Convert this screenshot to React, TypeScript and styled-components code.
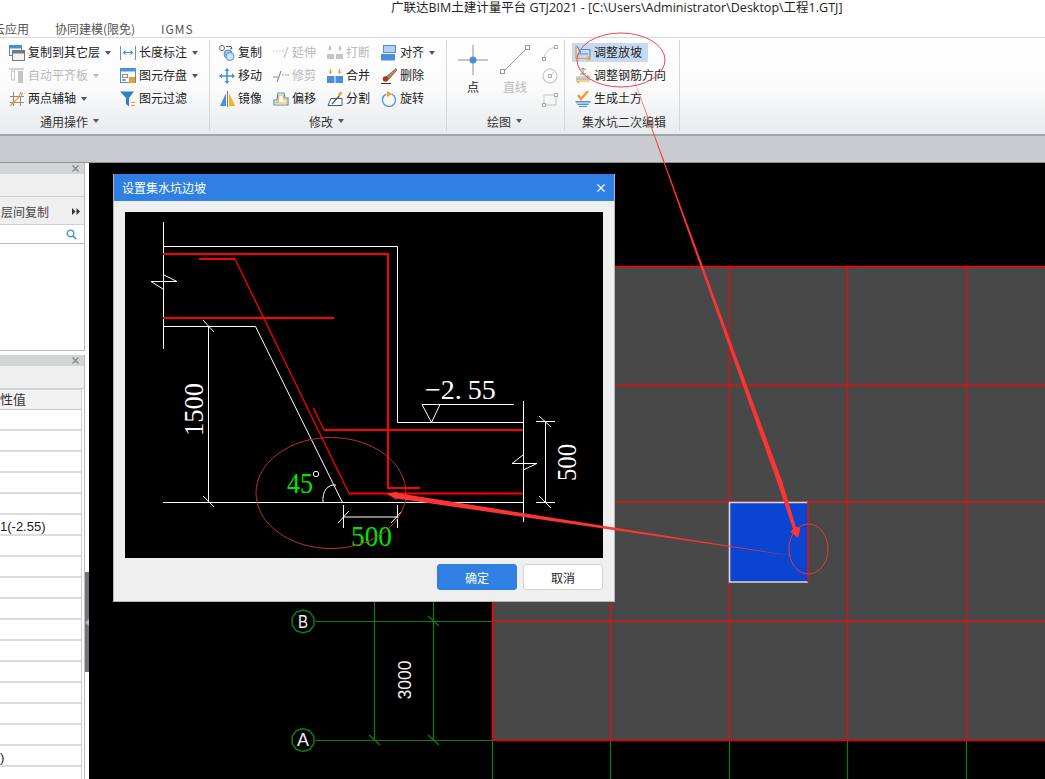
import React from 'react';
import styled, { createGlobalStyle } from 'styled-components';

const GlobalStyle = createGlobalStyle`
  html, body {
    margin: 0;
    padding: 0;
    background: #fff;
  }
  * {
    box-sizing: border-box;
  }
`;

const Page = styled.div`
  position: relative;
  width: 1045px;
  height: 779px;
  overflow: hidden;
  display: flex;
  flex-direction: column;
  font-family: "Noto Sans CJK SC", "Liberation Sans", sans-serif;
  font-size: 12px;
  color: #222;
`;

const TitleBar = styled.div`
  height: 22px;
  padding: 0 0 0 391px;
  font-family: "Open Sans", "Noto Sans CJK SC", sans-serif;
  font-size: 12.5px;
  line-height: 15px;
  white-space: nowrap;
  color: #222;
`;

const TabRow = styled.div`
  height: 16px;
  display: flex;
  border-bottom: 1px solid #d9d9d9;
  line-height: 13px;
  color: #555;
  white-space: nowrap;
`;

const Tab = styled.div<{ $width: number; $clip?: number; $spacing?: number }>`
  width: ${(p) => p.$width}px;
  margin-left: ${(p) => p.$clip ?? 0}px;
  letter-spacing: ${(p) => p.$spacing ?? 0}px;
`;

const Ribbon = styled.div`
  height: 98px;
  display: flex;
  background: linear-gradient(#fff 0%, #fbfbfb 50%, #e8ebed 100%);
  border-bottom: 2px solid #a4a6a9;
`;

const Group = styled.div<{ $width: number }>`
  width: ${(p) => p.$width}px;
  flex-shrink: 0;
  display: flex;
  flex-direction: column;
  padding-top: 3px;
  position: relative;

  &::after {
    content: '';
    position: absolute;
    right: 0;
    top: 2px;
    bottom: 3px;
    width: 1px;
    background: #d5d8db;
  }
`;

const GroupBody = styled.div<{ $left: number; $gap?: number }>`
  height: 69px;
  display: flex;
  padding-left: ${(p) => p.$left}px;
  gap: ${(p) => p.$gap ?? 0}px;
`;

const ToolColumn = styled.div<{ $width?: number }>`
  display: flex;
  flex-direction: column;
  width: ${(p) => (p.$width ? `${p.$width}px` : 'auto')};
`;

const Tool = styled.div<{ $disabled?: boolean; $active?: boolean; $inset?: boolean }>`
  height: 19px;
  margin: 2px 0;
  display: flex;
  align-items: center;
  gap: 3px;
  white-space: nowrap;
  padding: 0 ${(p) => (p.$inset ? 3 : 0)}px;
  color: ${(p) => (p.$disabled ? '#b9b9b9' : '#222')};
  background: ${(p) => (p.$active ? '#c6d9f1' : 'transparent')};
  width: ${(p) => (p.$active ? '76px' : 'auto')};
`;

const ToolLabel = styled.span`
  margin: -2px 2px 0 0;
`;

const Caret = styled.span<{ $disabled?: boolean }>`
  width: 0;
  height: 0;
  border-left: 3.5px solid transparent;
  border-right: 3.5px solid transparent;
  border-top: 4px solid ${(p) => (p.$disabled ? '#bdbdbd' : '#555')};
`;

const BigTool = styled.div<{ $disabled?: boolean }>`
  width: 30px;
  padding-top: 4px;
  display: flex;
  flex-direction: column;
  align-items: center;
  gap: 3px;
  color: ${(p) => (p.$disabled ? '#b9b9b9' : '#222')};
  line-height: 17px;
`;

const GroupLabel = styled.div<{ $left: number }>`
  height: 22px;
  padding-left: ${(p) => p.$left}px;
  display: flex;
  align-items: center;
  gap: 5px;
  white-space: nowrap;
  color: #333;
`;

const SubBar = styled.div`
  height: 26px;
  background: #c9cbce;
`;

const Workspace = styled.div`
  flex: 1;
  min-height: 0;
  display: flex;
  border-top: 1px solid #8f9296;
`;

const Sidebar = styled.div`
  width: 85px;
  flex-shrink: 0;
  display: flex;
  flex-direction: column;
  overflow: hidden;
  white-space: nowrap;
`;

const Panel = styled.div<{ $height?: number }>`
  ${(p) => (p.$height ? `height: ${p.$height}px;` : 'flex: 1; min-height: 0;')}
  display: flex;
  flex-direction: column;
  border-right: 1px solid #b9bbbe;
  background: #fff;
`;

const PanelHeader = styled.div`
  height: 11px;
  flex-shrink: 0;
  background: #d3d4d8;
  display: flex;
  align-items: center;
  justify-content: flex-end;
  padding-right: 5px;
`;

const PanelToolbar = styled.div<{ $height: number }>`
  height: ${(p) => p.$height}px;
  flex-shrink: 0;
  background: #efeff0;
  border-bottom: 1px solid #cfd0d2;
  display: flex;
  align-items: center;
  justify-content: space-between;
  padding: 1px 4px 0 1px;
  color: #444;
`;

const SearchRow = styled.div`
  height: 19px;
  flex-shrink: 0;
  display: flex;
  align-items: center;
  justify-content: flex-end;
  padding-right: 7px;
  border-bottom: 1px solid #b9bbbe;
`;

const PanelGap = styled.div`
  height: 5px;
  flex-shrink: 0;
  border-top: 1px solid #b9bbbe;
  background: #fff;
`;

const PropTable = styled.div`
  width: 82px;
  flex: 1;
  min-height: 0;
  border-right: 1px solid #d2d2d2;
  overflow: hidden;
`;

const PropHead = styled.div`
  height: 21px;
  background: #f2f2f2;
  border-bottom: 1px solid #c9c9c9;
  border-top: 1px solid #d2d2d2;
  line-height: 18px;
  font-size: 13px;
  color: #333;
`;

const PropRow = styled.div`
  height: 21px;
  border-bottom: 2px solid #dcdcdc;
  font-family: "Liberation Sans", "Noto Sans CJK SC", sans-serif;
  font-size: 13px;
  line-height: 23px;
  color: #222;
  overflow: hidden;
`;

const SplitterTrack = styled.div`
  width: 4px;
  flex-shrink: 0;
  background: #fff;
  padding-top: 409px;
`;

const SplitterHandle = styled.div`
  height: 100px;
  background: #6c7782;
  display: flex;
  align-items: center;
`;

const Canvas = styled.div`
  flex: 1;
  position: relative;
  background: #000;
  overflow: hidden;
`;

const CanvasDrawing = styled.svg`
  display: block;
  width: 956px;
  height: 616px;
`;

const Dialog = styled.div`
  position: absolute;
  left: 24px;
  top: 11px;
  width: 502px;
  height: 428px;
  background: #efefef;
  border: 1px solid #b4b6b8;
  border-top: none;
  display: flex;
  flex-direction: column;
`;

const DialogHeader = styled.div`
  height: 27px;
  flex-shrink: 0;
  background: #2f80e2;
  color: #fff;
  display: flex;
  align-items: center;
  justify-content: space-between;
  padding: 0 9px 0 8px;
`;

const DialogBody = styled.div`
  flex: 1;
  display: flex;
  flex-direction: column;
  padding: 11px;
`;

const SchemeDrawing = styled.svg`
  display: block;
  width: 478px;
  height: 346px;
  background: #000;
`;

const DialogFooter = styled.div`
  margin-top: 6px;
  display: flex;
  justify-content: flex-end;
  gap: 6px;
`;

const DialogButton = styled.button<{ $primary?: boolean }>`
  width: 80px;
  height: 26px;
  padding: 0;
  border-radius: 3px;
  font-family: inherit;
  font-size: 12px;
  border: 1px solid ${(p) => (p.$primary ? '#2f80e2' : '#d4d4d4')};
  background: ${(p) => (p.$primary ? '#2f80e2' : '#fff')};
  color: ${(p) => (p.$primary ? '#fff' : '#222')};
`;

const Annotations = styled.svg`
  position: absolute;
  left: 0;
  top: 0;
  width: 1045px;
  height: 779px;
  pointer-events: none;
`;

const BLUE = '#4a8fdc';
const ORANGE = '#f39a2b';
const GREY = '#8a8a8a';
const LIGHT = '#c4c4c4';

const Icon: React.FC<{ name: string; size?: number }> = ({ name, size = 16 }) => {
  const draw = () => {
    switch (name) {
      case 'copyFloor':
        return (
          <>
            <rect x="0.5" y="0.5" width="12" height="10" fill="#fff" stroke={BLUE} />
            <rect x="0.5" y="0.5" width="12" height="3" fill={BLUE} />
            <rect x="3.5" y="5.5" width="12" height="10" fill="#f4f4f4" stroke="#777" />
            <rect x="3.5" y="5.5" width="12" height="3" fill="#777" />
          </>
        );
      case 'autoAlign':
        return (
          <>
            <path d="M0 1h15" stroke={LIGHT} strokeWidth="1.5" />
            <rect x="2.5" y="3" width="3" height="9" fill="#fff" stroke={LIGHT} />
            <rect x="9" y="3" width="5" height="12" fill={LIGHT} />
          </>
        );
      case 'twoPoint':
        return (
          <>
            <path d="M4.5 1v14M11.5 1v14M1 5.5h14M1 11.5h14" stroke={GREY} />
            <path d="M1 15L14 2" stroke={ORANGE} strokeWidth="1.2" />
            <circle cx="11.5" cy="4" r="1.3" fill="#fff" stroke={GREY} strokeWidth="0.7" />
          </>
        );
      case 'dimension':
        return (
          <>
            <path d="M0.5 1v14M15.5 1v14" stroke={GREY} />
            <path d="M3 7.5h10" stroke={BLUE} />
            <path d="M2.5 7.5l3-2.5v5zM13.5 7.5l-3-2.5v5z" fill={BLUE} />
          </>
        );
      case 'save':
        return (
          <>
            <rect x="0.5" y="0.5" width="15" height="14" fill="#fff" stroke={BLUE} />
            <rect x="0.5" y="0.5" width="15" height="3" fill={BLUE} />
            <rect x="2.5" y="6.5" width="5" height="3" fill="none" stroke={GREY} />
            <rect x="2.5" y="11" width="3" height="2" fill={GREY} />
            <rect x="9" y="9" width="6" height="6" fill={ORANGE} />
          </>
        );
      case 'filter':
        return (
          <>
            <path d="M0 0.5h14L9 7v8.5L6 13V7z" fill="#2f7fc1" />
            <path d="M11 11.5h4M11 14.5h4" stroke={ORANGE} strokeWidth="1.2" />
          </>
        );
      case 'copy':
        return (
          <>
            <circle cx="3" cy="3" r="2.5" fill="#fff" stroke="#666" />
            <circle cx="9" cy="9" r="4" fill="#9cc2ea" stroke={BLUE} />
            <circle cx="11" cy="11.5" r="4" fill="#cfe2f6" stroke={BLUE} />
            <path d="M7 1.5h5l1 2M13 3.5l-2 .5" fill="none" stroke="#555" />
          </>
        );
      case 'move':
        return (
          <path
            d="M8 0l2.5 3h-1.7v4.2H13V5.5L16 8l-3 2.5V8.8H8.8V13h1.7L8 16l-2.5-3h1.7V8.8H3v1.7L0 8l3-2.5v1.7h4.2V3H5.5z"
            fill={BLUE}
          />
        );
      case 'mirror':
        return (
          <>
            <path d="M7 2v13H1z" fill={BLUE} />
            <path d="M8.5 0v16" stroke="#777" />
            <path d="M10 2v13h6z" fill="#f4b21f" />
          </>
        );
      case 'extend':
        return (
          <path d="M0 6h1.5M3 6h1.5M6 6h1.5M9 6h2M11 13l4-11" stroke={LIGHT} fill="none" strokeWidth="1.2" />
        );
      case 'trim':
        return (
          <path d="M0 9h5M9 7h1.5M12 7h1.5M14.5 7h1.5M4 14l4-11" stroke="#8b8b8b" fill="none" strokeWidth="1.1" />
        );
      case 'offset':
        return (
          <>
            <path d="M5 2h6l1 5h3v7H1v-5h3z" fill="#fff" stroke={BLUE} strokeWidth="1.2" />
            <path d="M6 4h4l1 5h3v3H3v-1h2z" fill="#fff" stroke="#f4b21f" strokeWidth="1.2" />
          </>
        );
      case 'break':
        return (
          <>
            <path d="M2 1v2.5H1L3 6l2-2.5H4V1zM12 1v2.5h-1L13 6l2-2.5h-1V1z" fill={LIGHT} />
            <rect x="0" y="9" width="7" height="5" fill={LIGHT} />
            <rect x="9" y="9" width="7" height="5" fill={LIGHT} />
          </>
        );
      case 'merge':
        return (
          <>
            <path d="M3 1v2.5H1.5L3.5 6l2-2.5H4V1zM12 1v2.5h-1.5L12.5 6l2-2.5H13V1z" fill={ORANGE} />
            <rect x="0" y="8" width="16" height="7" fill={BLUE} />
            <path d="M8 8v7" stroke="#fff" />
          </>
        );
      case 'split':
        return (
          <>
            <path d="M1 14.5l3-7h11v7z" fill="#fff" stroke="#3a5a8c" />
            <path d="M5 13l8-9" stroke="#555" strokeWidth="1.2" />
            <path d="M11 3l3-2.5 1.5 1.5-3 3z" fill={ORANGE} />
          </>
        );
      case 'align':
        return (
          <>
            <rect x="2.5" y="0.5" width="12" height="7" fill="#b5d0ef" stroke={BLUE} />
            <rect x="0" y="9" width="14" height="6.5" fill={BLUE} />
          </>
        );
      case 'delete':
        return (
          <>
            <path d="M15 0.5L5 9l2.5 2.5L16 2z" fill="#b88a5a" stroke="#70502d" strokeWidth="0.7" />
            <circle cx="4.5" cy="11" r="2.8" fill="#a83a20" />
            <path d="M0 15.5h10" stroke="#333" />
          </>
        );
      case 'rotate':
        return (
          <>
            <path d="M5 3.2A6.5 6.5 0 1 0 10.5 3" fill="none" stroke={BLUE} strokeWidth="1.3" />
            <path d="M6 0l5 3-5 3z" fill={ORANGE} />
          </>
        );
      case 'point':
        return (
          <>
            <path d="M15 0v30M0 15h30" stroke="#8b8f96" />
            <circle cx="15" cy="15" r="3.5" fill={BLUE} />
          </>
        );
      case 'line':
        return (
          <>
            <path d="M3 27L27 3" stroke="#9a9a9a" />
            <rect x="0.5" y="24.5" width="4" height="4" fill="#fff" stroke="#9a9a9a" />
            <rect x="25.5" y="0.5" width="4" height="4" fill="#fff" stroke="#9a9a9a" />
          </>
        );
      case 'arc':
        return (
          <>
            <path d="M2 14C3 6 8 3 14 2" fill="none" stroke={LIGHT} />
            <rect x="0.5" y="12.5" width="3" height="3" fill="#fff" stroke="#aaa" />
            <rect x="12.5" y="0.5" width="3" height="3" fill="#fff" stroke="#aaa" />
          </>
        );
      case 'circle':
        return (
          <>
            <circle cx="8" cy="8" r="7" fill="none" stroke={LIGHT} strokeWidth="1.2" />
            <path d="M8 8l4-4" stroke={LIGHT} />
            <rect x="6.5" y="6.5" width="3" height="3" fill="#fff" stroke="#aaa" />
          </>
        );
      case 'rect':
        return (
          <>
            <path d="M2 4h12v10H2z" fill="none" stroke={LIGHT} />
            <rect x="0.5" y="12.5" width="3" height="3" fill="#fff" stroke="#aaa" />
            <rect x="12.5" y="2.5" width="3" height="3" fill="#fff" stroke="#aaa" />
          </>
        );
      case 'slope':
        return (
          <>
            <path d="M2 1l4 7M6 4.5h9V12M3 9h10" fill="none" stroke={BLUE} strokeWidth="1.1" />
            <path d="M1 13.5h14M1 1v12.5M12.5 11.5l3 2-3 2" fill="none" stroke={ORANGE} strokeWidth="1.2" />
          </>
        );
      case 'rebarDir':
        return (
          <>
            <path d="M8 0v6M5 2l3-2 3 2M5 6h6" fill="none" stroke="#888" />
            <path d="M1 9h13l-2-2M15 13H2l2 2" fill="none" stroke={ORANGE} strokeWidth="1.2" />
            <path d="M1 11h14" stroke={BLUE} />
          </>
        );
      case 'earth':
        return (
          <>
            <path d="M3 4l3 4 7-8" fill="none" stroke={ORANGE} strokeWidth="2.4" />
            <path d="M0 10h16l-3 4H3z" fill={BLUE} />
            <path d="M2 12h12" stroke="#fff" />
            <path d="M4 15.5h8" stroke={BLUE} />
          </>
        );
      default:
        return null;
    }
  };
  const box = name === 'point' || name === 'line' ? 30 : 16;
  return (
    <svg width={size} height={size} viewBox={`0 0 ${box} ${box}`} style={{ flexShrink: 0 }}>
      {draw()}
    </svg>
  );
};

const PaneClose = () => (
  <svg width="7" height="7" viewBox="0 0 7 7">
    <path d="M0.5 0.5l6 6M6.5 0.5l-6 6" stroke="#85878a" strokeWidth="1.3" />
  </svg>
);

type ToolDef = {
  icon: string;
  label?: string;
  caret?: boolean;
  disabled?: boolean;
  active?: boolean;
};

const ToolItem: React.FC<ToolDef & { inset?: boolean }> = ({ icon, label, caret, disabled, active, inset }) => (
  <Tool $disabled={disabled} $active={active} $inset={inset}>
    <Icon name={icon} />
    {label && <ToolLabel>{label}</ToolLabel>}
    {caret && <Caret $disabled={disabled} />}
  </Tool>
);

const commonA: ToolDef[] = [
  { icon: 'copyFloor', label: '复制到其它层', caret: true },
  { icon: 'autoAlign', label: '自动平齐板', caret: true, disabled: true },
  { icon: 'twoPoint', label: '两点辅轴', caret: true },
];
const commonB: ToolDef[] = [
  { icon: 'dimension', label: '长度标注', caret: true },
  { icon: 'save', label: '图元存盘', caret: true },
  { icon: 'filter', label: '图元过滤' },
];
const modifyColumns: ToolDef[][] = [
  [
    { icon: 'copy', label: '复制' },
    { icon: 'move', label: '移动' },
    { icon: 'mirror', label: '镜像' },
  ],
  [
    { icon: 'extend', label: '延伸', disabled: true },
    { icon: 'trim', label: '修剪', disabled: true },
    { icon: 'offset', label: '偏移' },
  ],
  [
    { icon: 'break', label: '打断', disabled: true },
    { icon: 'merge', label: '合并' },
    { icon: 'split', label: '分割' },
  ],
  [
    { icon: 'align', label: '对齐', caret: true },
    { icon: 'delete', label: '删除' },
    { icon: 'rotate', label: '旋转' },
  ],
];
const sumpTools: ToolDef[] = [
  { icon: 'slope', label: '调整放坡', active: true },
  { icon: 'rebarDir', label: '调整钢筋方向' },
  { icon: 'earth', label: '生成土方' },
];

const propRows: Record<number, string> = { 5: '1(-2.55)', 16: ')' };

const gridX = [492, 610, 729, 847, 966];
const gridY = [266, 385, 502, 621, 740];

// grid bubbles are drawn as ten sided polygons in the CAD view
const bubble = (cx: number, cy: number, r: number) =>
  Array.from({ length: 10 }, (_, i) => {
    const a = (Math.PI / 5) * i + Math.PI / 10;
    return `${(cx + r * Math.cos(a)).toFixed(1)},${(cy + r * Math.sin(a)).toFixed(1)}`;
  }).join(' ');

const CadCanvas = () => (
  <CanvasDrawing viewBox="89 163 956 616">
    <rect x="492" y="266" width="553" height="474" fill="#484848" />
    {gridX.slice(1).map((x) => (
      <path key={x} d={`M${x + 0.5} 267V740`} stroke="#d41212" strokeWidth="1.5" />
    ))}
    {gridY.slice(1, -1).map((y) => (
      <path key={y} d={`M492 ${y}H1045`} stroke="#dc1010" strokeWidth="1.6" />
    ))}
    <rect x="729.5" y="502.5" width="78" height="79" fill="#0c44d2" />
    <path d="M808 582H729.5V502.5H808" fill="none" stroke="#d8d8d8" strokeWidth="1.6" />
    <path d="M808 502V582" stroke="#dc1212" strokeWidth="1.6" />
    <path d="M492 266.5H1045" stroke="#ff0000" strokeWidth="1.4" />
    <path d="M492.5 266V740" stroke="#ff0000" strokeWidth="1.6" />
    <path d="M492 740.5H1045" stroke="#e80000" strokeWidth="1.6" />

    <g stroke="#0a800a" fill="none" strokeWidth="1.2">
      <path d="M315 621.5H492M315 740.5H492" />
      <path d="M374.5 590V740M433.5 590V740" />
      <path d="M369 735l11 10M428 735l11 10M428 616l11 10" />
      {gridX.map((x) => (
        <path key={x} d={`M${x + 0.5} 741V779`} />
      ))}
      <polygon points={bubble(303, 621.5, 11.5)} strokeWidth="1.5" />
      <polygon points={bubble(303, 740, 11.5)} strokeWidth="1.5" />
    </g>
    <g fill="#f0f0f0" fontFamily="'Liberation Sans', sans-serif" fontSize="18">
      <text x="298" y="628" textLength="10" lengthAdjust="spacingAndGlyphs">B</text>
      <text x="297" y="746">A</text>
      <text transform="translate(411 699.5) rotate(-90)" fontSize="19" textLength="39" lengthAdjust="spacingAndGlyphs">3000</text>
    </g>
  </CanvasDrawing>
);

const SchemeSketch = () => (
  <SchemeDrawing viewBox="125 212 478 346">
    <g stroke="#fff" fill="none" strokeWidth="1">
      <path d="M163.5 222V349" />
      <path d="M163 246.5H397.5V422.5H523" />
      <path d="M163 326.5H255.5L342.5 502.5" />
      <path d="M163 502.5H523" />
      <path d="M523.5 401V522" />
      <path d="M151 281.5H177M151 281.5L163 289M163 274.5L177 281.5" />
      <path d="M512 463.5H537M512 463.5L523 455M523 470L537 463.5" />
      <path d="M208.5 326V502M203 320l11 12M203 496l11 11" />
      <path d="M422 404.5H514M422 404.5L431.5 422.5L440 404.5" />
      <path d="M545.5 422V502M536 421.5H555M536 502.5H555M539 416l12 11M539 496l12 12" />
      <path d="M343.5 505V528M397.5 505V528M343.5 517H397.5M338 523l11-12M391 523l11-12" />
      <path d="M323 502C322 491 328 484 336 485" />
      <circle cx="316" cy="474" r="2.7" />
    </g>
    <g stroke="#f00" fill="none" strokeWidth="2">
      <path d="M163 254H388V488H420" />
      <path d="M163 318H334" />
      <path d="M199 259H235" />
      <path d="M349 493.5H523" />
      <path d="M324 430H523" />
    </g>
    <g stroke="#f00" fill="none" strokeWidth="1.3">
      <path d="M235 259L349 493.5" />
      <path d="M313.5 408L324 430" />
    </g>
    <g fill="#fff" fontFamily="'Liberation Serif', serif">
      <text x="425" y="399" fontSize="28">
        −2.<tspan dx="6">55</tspan>
      </text>
      <text transform="translate(203 436) rotate(-90)" fontSize="28" textLength="53" lengthAdjust="spacingAndGlyphs">1500</text>
      <text transform="translate(576 481) rotate(-90)" fontSize="28" textLength="37" lengthAdjust="spacingAndGlyphs">500</text>
    </g>
    <g fill="#00e600" fontFamily="'Liberation Serif', serif" fontSize="29">
      <text x="287" y="493" textLength="26" lengthAdjust="spacingAndGlyphs">45</text>
      <text x="351" y="546" textLength="41" lengthAdjust="spacingAndGlyphs">500</text>
    </g>
  </SchemeDrawing>
);

const App: React.FC = () => (
  <Page>
    <GlobalStyle />
    <TitleBar>广联达BIM土建计量平台 GTJ2021 - [C:\Users\Administrator\Desktop\工程1.GTJ]</TitleBar>
    <TabRow>
      <Tab $width={55} $clip={-7}>云应用</Tab>
      <Tab $width={106} $clip={7}>协同建模(限免)</Tab>
      <Tab $width={40} $spacing={1}>IGMS</Tab>
    </TabRow>
    <Ribbon>
      <Group $width={210}>
        <GroupBody $left={9}>
          <ToolColumn $width={111}>
            {commonA.map((t) => (
              <ToolItem key={t.icon} {...t} />
            ))}
          </ToolColumn>
          <ToolColumn>
            {commonB.map((t) => (
              <ToolItem key={t.icon} {...t} />
            ))}
          </ToolColumn>
        </GroupBody>
        <GroupLabel $left={40}>
          通用操作
          <Caret />
        </GroupLabel>
      </Group>
      <Group $width={237}>
        <GroupBody $left={9}>
          {modifyColumns.map((col) => (
            <ToolColumn key={col[0].icon} $width={54}>
              {col.map((t) => (
                <ToolItem key={t.icon} {...t} />
              ))}
            </ToolColumn>
          ))}
        </GroupBody>
        <GroupLabel $left={99}>
          修改
          <Caret />
        </GroupLabel>
      </Group>
      <Group $width={118}>
        <GroupBody $left={11} $gap={12}>
          <BigTool>
            <Icon name="point" size={30} />
            点
          </BigTool>
          <BigTool $disabled>
            <Icon name="line" size={30} />
            直线
          </BigTool>
          <ToolColumn>
            <ToolItem icon="arc" />
            <ToolItem icon="circle" />
            <ToolItem icon="rect" />
          </ToolColumn>
        </GroupBody>
        <GroupLabel $left={40}>
          绘图
          <Caret />
        </GroupLabel>
      </Group>
      <Group $width={115}>
        <GroupBody $left={7}>
          <ToolColumn>
            {sumpTools.map((t) => (
              <ToolItem key={t.icon} {...t} inset />
            ))}
          </ToolColumn>
        </GroupBody>
        <GroupLabel $left={17}>集水坑二次编辑</GroupLabel>
      </Group>
    </Ribbon>
    <SubBar />
    <Workspace>
      <Sidebar>
        <Panel $height={187}>
          <PanelHeader>
            <PaneClose />
          </PanelHeader>
          <PanelToolbar $height={23} />
          <PanelToolbar $height={28}>
            层间复制
            <svg width="8" height="7" viewBox="0 0 8 7">
              <path d="M0 0l3.5 3.5L0 7zM4.5 0L8 3.5 4.5 7z" fill="#333" />
            </svg>
          </PanelToolbar>
          <SearchRow>
            <svg width="11" height="11" viewBox="0 0 11 11">
              <circle cx="4.5" cy="4.5" r="3.3" fill="none" stroke="#3f8fc4" strokeWidth="1.3" />
              <path d="M7 7l3 3" stroke="#3f8fc4" strokeWidth="1.6" />
            </svg>
          </SearchRow>
        </Panel>
        <PanelGap />
        <Panel>
          <PanelHeader>
            <PaneClose />
          </PanelHeader>
          <PanelToolbar $height={23} />
          <PropTable>
            <PropHead>性值</PropHead>
            {Array.from({ length: 18 }, (_, i) => (
              <PropRow key={i}>{propRows[i]}</PropRow>
            ))}
          </PropTable>
        </Panel>
      </Sidebar>
      <SplitterTrack>
        <SplitterHandle>
          <svg width="4" height="7" viewBox="0 0 4 7">
            <path d="M4 0L0 3.5 4 7z" fill="#b4bac0" />
          </svg>
        </SplitterHandle>
      </SplitterTrack>
      <Canvas>
        <CadCanvas />
        <Dialog>
          <DialogHeader>
            设置集水坑边坡
            <svg width="8" height="8" viewBox="0 0 8 8">
              <path d="M0.5 0.5l7 7M7.5 0.5l-7 7" stroke="#fff" strokeWidth="1.3" />
            </svg>
          </DialogHeader>
          <DialogBody>
            <SchemeSketch />
            <DialogFooter>
              <DialogButton $primary>确定</DialogButton>
              <DialogButton>取消</DialogButton>
            </DialogFooter>
          </DialogBody>
        </Dialog>
      </Canvas>
    </Workspace>
    <Annotations viewBox="0 0 1045 779">
      <g fill="none" strokeWidth="1">
        <ellipse cx="621" cy="60" rx="44" ry="27" stroke="#e8474c" />
        <ellipse cx="331" cy="493" rx="75" ry="55.5" stroke="#b8322f" />
        <ellipse cx="808.5" cy="549" rx="19.5" ry="25" stroke="#d8403f" />
      </g>
      <path
        d="M627 60L781.7 480L796 527L800.5 527.5L798 538L790.5 532L793 529L776.5 480Z"
        fill="#fb3434"
      />
      <path d="M800 557L396.5 498.5L397 500L387 494L397.5 491.5L397 493Z" fill="#fb3434" />
    </Annotations>
  </Page>
);

export default App;
